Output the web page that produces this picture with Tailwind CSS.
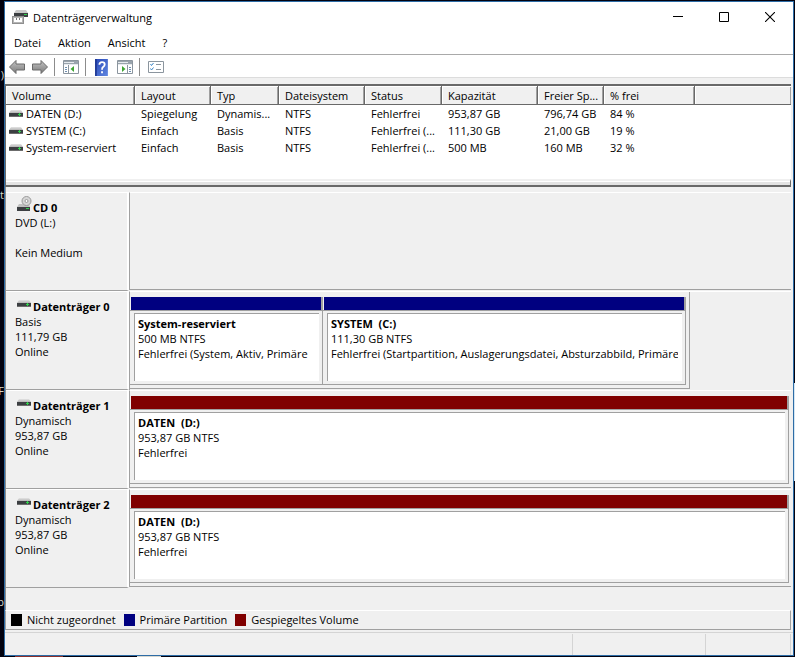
<!DOCTYPE html>
<html lang="de">
<head>
  <meta charset="UTF-8" />
  <title>Datenträgerverwaltung</title>
  <meta name="viewport" content="width=device-width, initial-scale=1.0" />
  <script src="https://cdn.jsdelivr.net/npm/@tailwindcss/browser@4"></script>
</head>
<body class="relative flex min-h-screen overflow-hidden bg-[#02020f] pt-px pr-px pb-px pl-1 font-['Open_Sans',sans-serif] text-[11px] leading-[15px] text-black">

<!-- Shared icons -->
<svg class="absolute h-0 w-0">
  <linearGradient id="lid" x1="0" y1="0" x2="0" y2="1">
    <stop offset="0" stop-color="#e4e4e4" /><stop offset="1" stop-color="#b4b4b4" />
  </linearGradient>
  <linearGradient id="arrow" x1="0" y1="0" x2="0" y2="1">
    <stop offset="0" stop-color="#c4c4c4" /><stop offset="1" stop-color="#7a7a7a" />
  </linearGradient>
  <linearGradient id="book" x1="0" y1="0" x2="1" y2="1">
    <stop offset="0" stop-color="#2848b8" /><stop offset="1" stop-color="#5f86e0" />
  </linearGradient>
  <symbol id="drive" viewBox="0 0 14 7">
    <path d="M2 0h10l2 3H0z" fill="url(#lid)" />
    <rect y="3" width="14" height="4" fill="#3c3f42" />
    <rect y="6" width="14" height="1" fill="#6c6c6c" />
    <rect x="9" y="4" width="3" height="1" fill="#2fd04a" />
    <rect x="10" y="3" width="1" height="3" fill="#2fd04a" />
  </symbol>
</svg>

<!-- Desktop behind the window -->
<div class="absolute inset-y-0 left-0 w-1 overflow-hidden text-[#d8d8c8]" aria-hidden="true">
  <span class="absolute top-[67px] right-0">)</span>
  <span class="absolute top-[187px] right-0">t</span>
  <span class="absolute top-[383px] right-0">F</span>
  <span class="absolute top-[594px] right-0">p</span>
</div>
<div class="absolute top-[383px] right-0 h-[98px] w-px bg-[#d5e6f2]"></div>
<div class="absolute bottom-0 left-[15px] h-px w-12 bg-[#8c2f2a]"></div>
<div class="absolute bottom-0 left-[137px] h-px w-6 bg-[#d8d8d0]"></div>

<main class="flex min-w-0 flex-1 flex-col border border-[#2d6ca6] bg-[#f0f0f0]">

  <!-- Title bar -->
  <header class="flex h-[30px] items-center bg-white pl-[7px]">
    <svg class="mr-[5px] h-4 w-4" viewBox="0 0 16 16">
      <path d="M4 1h10l2 3H2z" fill="#c9c9c9" />
      <path d="M2 4h14v4H2z" fill="#3c3f42" />
      <rect x="12" y="5" width="3" height="1" fill="#2fd04a" />
      <path d="M0 7h12v8H0z" fill="#8f8f8f" />
      <path d="M1 8h10v6H1z" fill="#b5b5b5" />
      <path d="M2 9h8v4H2z" fill="#fff" />
      <path d="M4 9h1v2H4zM7 9h1v2H7z" fill="#777" />
    </svg>
    <h1 class="flex-1">Datenträgerverwaltung</h1>
    <button aria-label="Minimieren" class="flex h-full w-[46px] items-center justify-center">
      <svg class="h-[10px] w-[10px]" viewBox="0 0 10 10"><path d="M0 4.500h10" stroke="#000" /></svg>
    </button>
    <button aria-label="Maximieren" class="flex h-full w-[46px] items-center justify-center">
      <svg class="h-[10px] w-[10px]" viewBox="0 0 10 10"><path d="M.5.5h9v9h-9z" fill="none" stroke="#000" /></svg>
    </button>
    <button aria-label="Schließen" class="flex h-full w-[46px] items-center justify-center">
      <svg class="h-[10px] w-[10px]" viewBox="0 0 10 10"><path d="M0 0l10 10M10 0L0 10" stroke="#000" stroke-width="1.100" /></svg>
    </button>
  </header>

  <!-- Menu -->
  <nav class="flex h-[23px] items-center gap-[17px] border-b border-[#a9a9a9] bg-white pb-[2px] pl-[9px]">
    <button>Datei</button>
    <button>Aktion</button>
    <button>Ansicht</button>
    <button>?</button>
  </nav>

  <!-- Toolbar -->
  <div class="flex h-[23px] items-center border-b border-[#dcdcdc] bg-white pt-[2px] pl-1">
    <button aria-label="Zurück">
      <svg class="h-4 w-4" viewBox="0 0 16 16"><path d="M.5 8L7 1.500V5h8.500v6H7v3.500z" fill="url(#arrow)" stroke="#6a6a6a" /></svg>
    </button>
    <button aria-label="Vorwärts" class="ml-[7px]">
      <svg class="h-4 w-4" viewBox="0 0 16 16"><path d="M15.500 8L9 1.500V5H.5v6H9v3.500z" fill="url(#arrow)" stroke="#6a6a6a" /></svg>
    </button>
    <div class="mx-[6px] h-[18px] w-px bg-[#8c8c8c]"></div>
    <button aria-label="Konsolenstruktur einblenden" class="ml-[2px]">
      <svg class="h-4 w-4" viewBox="0 0 16 16">
        <path d="M.5 1.500h15v13H.5z" fill="#fff" stroke="#8b959e" />
        <path d="M1 2h14v3H1z" fill="#9aa4ad" />
        <path d="M1 3.500h10M1 5.500h14" stroke="#e6eaee" />
        <path d="M5.500 6v8.500" stroke="#8b959e" />
        <path d="M2 8.500h2M2 10.500h2M2 12.500h2" stroke="#6e8fb0" />
        <path d="M11 7v6l-3.500-3z" fill="#3fa535" />
      </svg>
    </button>
    <div class="mx-[6px] h-[18px] w-px bg-[#8c8c8c]"></div>
    <button aria-label="Hilfe" class="ml-[2px]">
      <svg class="h-[17px] w-[15px]" viewBox="0 0 14 16">
        <path d="M1 0h12v16H1z" fill="url(#book)" />
        <path d="M1 0h1.500v16H1z" fill="#1c3590" />
        <path d="M5 5.500q0-2.500 2.500-2.500T10 5.200Q10 6.500 8.500 7.600 7.500 8.300 7.500 10M7.500 11.500v1.800" fill="none" stroke="#fff" stroke-width="1.700" />
      </svg>
    </button>
    <button aria-label="Aktionsbereich einblenden" class="ml-2">
      <svg class="h-4 w-4" viewBox="0 0 16 16">
        <path d="M.5 1.500h15v13H.5z" fill="#fff" stroke="#8b959e" />
        <path d="M1 2h14v3H1z" fill="#9aa4ad" />
        <path d="M1 3.500h10M1 5.500h14" stroke="#e6eaee" />
        <path d="M10.500 6v8.500" stroke="#8b959e" />
        <path d="M12 8.500h2M12 10.500h2M12 12.500h2" stroke="#6e8fb0" />
        <path d="M5 7v6l3.500-3z" fill="#3fa535" />
      </svg>
    </button>
    <div class="mx-[6px] h-[18px] w-px bg-[#8c8c8c]"></div>
    <button aria-label="Eigenschaften" class="ml-[2px]">
      <svg class="h-4 w-4" viewBox="0 0 16 16">
        <path d="M.5 2.500h15v11H.5z" fill="#fff" stroke="#8b959e" />
        <path d="M2.500 5l1 1.500 2-2.500M2.500 9.500l1 1.500 2-2.500" fill="none" stroke="#3a86c8" />
        <path d="M8 5.500h5M8 10.500h5" stroke="#8b959e" />
      </svg>
    </button>
  </div>

  <!-- Volume list -->
  <section class="mt-[6px] mr-[2px] border-t-2 border-l border-[#696969] bg-white">
    <table class="w-full table-fixed border-separate border-spacing-0 text-left">
      <colgroup>
        <col class="w-[129px]" /><col class="w-[76px]" /><col class="w-[68px]" /><col class="w-[86px]" />
        <col class="w-[77px]" /><col class="w-[96px]" /><col class="w-[66px]" /><col class="w-[91px]" /><col />
      </colgroup>
      <thead class="bg-[#f0f0f0]">
        <tr class="[&>th]:h-[19px] [&>th]:truncate [&>th]:border-r [&>th]:border-b [&>th]:border-[#696969] [&>th]:pl-[6px] [&>th]:font-normal [&>th]:shadow-[inset_1px_1px_#fff,inset_-1px_0_#a0a0a0]">
          <th>Volume</th><th>Layout</th><th>Typ</th><th>Dateisystem</th><th>Status</th><th>Kapazität</th><th>Freier Sp...</th><th>% frei</th><th class="border-r-0!"></th>
        </tr>
      </thead>
      <tbody class="[&_td]:h-[17px] [&_td]:truncate [&_td]:pl-[6px] [&_td:first-child]:pl-[3px]">
        <tr>
          <td><svg class="mr-[3px] mb-px inline h-[7px] w-[14px] align-baseline"><use href="#drive" /></svg>DATEN (D:)</td>
          <td>Spiegelung</td><td>Dynamis...</td><td>NTFS</td><td>Fehlerfrei</td><td>953,87 GB</td><td>796,74 GB</td><td>84 %</td><td></td>
        </tr>
        <tr>
          <td><svg class="mr-[3px] mb-px inline h-[7px] w-[14px] align-baseline"><use href="#drive" /></svg>SYSTEM (C:)</td>
          <td>Einfach</td><td>Basis</td><td>NTFS</td><td>Fehlerfrei (...</td><td>111,30 GB</td><td>21,00 GB</td><td>19 %</td><td></td>
        </tr>
        <tr>
          <td><svg class="mr-[3px] mb-px inline h-[7px] w-[14px] align-baseline"><use href="#drive" /></svg>System-reserviert</td>
          <td>Einfach</td><td>Basis</td><td>NTFS</td><td>Fehlerfrei (...</td><td>500 MB</td><td>160 MB</td><td>32 %</td><td></td>
        </tr>
      </tbody>
    </table>
    <div class="h-[23px]"></div>
    <!-- Splitter -->
    <div class="h-2 border-t-2 border-r border-b-2 border-t-[#f0f0f0] border-r-[#696969] border-b-[#696969] bg-[#e3e3e3] shadow-[inset_0_1px_#fff]"></div>
  </section>

  <!-- Disks -->
  <section class="mr-[2px] flex-1 border-l border-[#8c8c8c] pt-[5px]">
    <div class="flex h-[99px]">
      <div class="w-[123px] border-t border-r-2 border-b border-t-white border-r-white border-b-[#a0a0a0] pt-[7px] pl-[9px]">
        <h2 class="relative pl-[18px] font-bold"><svg class="absolute bottom-1 left-[2px] h-[15px] w-[15px]" viewBox="0 0 15 15">
          <path d="M2 8h10l1 3H0z" fill="#c0c0c0" />
          <circle cx="9.500" cy="5" r="4.500" fill="#d6d6d6" stroke="#9a9a9a" /><circle cx="9.500" cy="5" r="1.500" fill="#fff" stroke="#9a9a9a" />
          <path d="M0 11h13v4H0z" fill="#3c3f42" /><path d="M9 12.500h3" stroke="#2fd04a" />
        </svg>CD 0</h2>
        <p>DVD (L:)</p>
        <p class="mt-[15px]">Kein Medium</p>
      </div>
      <div class="mb-px flex-1 border-t border-b border-l border-t-white border-b-[#a0a0a0] border-l-[#a0a0a0]"></div>
    </div>

    <div class="flex h-[99px]">
      <div class="w-[123px] border-t border-r-2 border-b border-t-white border-r-white border-b-[#a0a0a0] pt-[7px] pl-[9px]">
        <h2 class="relative pl-[18px] font-bold"><svg class="absolute bottom-[7px] left-[2px] h-[7px] w-[14px]"><use href="#drive" /></svg>Datenträger 0</h2>
        <p>Basis</p>
        <p>111,79 GB</p>
        <p>Online</p>
      </div>
      <div class="flex-1 border-t border-l border-t-white border-l-[#a0a0a0]">
        <div class="mb-px flex h-[97px] w-[560px] max-w-full border-r border-b border-[#a0a0a0] pt-[5px] pr-[3px] pb-[3px]">
          <div class="flex w-[193px] flex-col border-r border-b border-[#a0a0a0] pb-[3px]">
            <div class="ml-px h-[13px] border-r border-[#a0a0a0] bg-[#000080]"></div>
            <div class="mb-[2px] h-px bg-[#a0a0a0]"></div>
            <div class="mr-[3px] ml-1 flex-1 border-t border-l border-[#a0a0a0] bg-white pt-[2px] pr-[6px] pl-[3px] whitespace-nowrap">
              <h3 class="overflow-hidden font-bold">System-reserviert</h3>
              <p class="overflow-hidden">500 MB NTFS</p>
              <p class="overflow-hidden">Fehlerfrei (System, Aktiv, Primäre</p>
            </div>
          </div>
          <div class="flex min-w-0 flex-1 flex-col border-r border-b border-[#a0a0a0] pb-[3px]">
            <div class="ml-px h-[13px] border-r border-[#a0a0a0] bg-[#000080]"></div>
            <div class="mb-[2px] h-px bg-[#a0a0a0]"></div>
            <div class="mr-[3px] ml-1 flex-1 border-t border-l border-[#a0a0a0] bg-white pt-[2px] pr-1 pl-[3px] whitespace-nowrap">
              <h3 class="overflow-hidden font-bold">SYSTEM&nbsp; (C:)</h3>
              <p class="overflow-hidden">111,30 GB NTFS</p>
              <p class="overflow-hidden">Fehlerfrei (Startpartition, Auslagerungsdatei, Absturzabbild, Primäre</p>
            </div>
          </div>
        </div>
      </div>
    </div>

    <div class="flex h-[99px]">
      <div class="w-[123px] border-t border-r-2 border-b border-t-white border-r-white border-b-[#a0a0a0] pt-[7px] pl-[9px]">
        <h2 class="relative pl-[18px] font-bold"><svg class="absolute bottom-[7px] left-[2px] h-[7px] w-[14px]"><use href="#drive" /></svg>Datenträger 1</h2>
        <p>Dynamisch</p>
        <p>953,87 GB</p>
        <p>Online</p>
      </div>
      <div class="mb-px flex-1 border-t border-b border-l border-t-white border-b-[#a0a0a0] border-l-[#a0a0a0] pt-[5px] pr-[2px] pb-[3px]">
        <div class="flex h-full flex-col border-r border-b border-[#a0a0a0] pb-[3px]">
          <div class="ml-px h-[13px] border-r border-[#a0a0a0] bg-[#800000]"></div>
          <div class="mb-[2px] h-px bg-[#a0a0a0]"></div>
          <div class="mr-[3px] ml-1 flex-1 border-t border-l border-[#a0a0a0] bg-white pt-[2px] pl-[3px]">
            <h3 class="font-bold">DATEN&nbsp; (D:)</h3>
            <p>953,87 GB NTFS</p>
            <p>Fehlerfrei</p>
          </div>
        </div>
      </div>
    </div>

    <div class="flex h-[99px]">
      <div class="w-[123px] border-t border-r-2 border-b border-t-white border-r-white border-b-[#a0a0a0] pt-[7px] pl-[9px]">
        <h2 class="relative pl-[18px] font-bold"><svg class="absolute bottom-[7px] left-[2px] h-[7px] w-[14px]"><use href="#drive" /></svg>Datenträger 2</h2>
        <p>Dynamisch</p>
        <p>953,87 GB</p>
        <p>Online</p>
      </div>
      <div class="mb-px flex-1 border-t border-b border-l border-t-white border-b-[#a0a0a0] border-l-[#a0a0a0] pt-[5px] pr-[2px] pb-[3px]">
        <div class="flex h-full flex-col border-r border-b border-[#a0a0a0] pb-[3px]">
          <div class="ml-px h-[13px] border-r border-[#a0a0a0] bg-[#800000]"></div>
          <div class="mb-[2px] h-px bg-[#a0a0a0]"></div>
          <div class="mr-[3px] ml-1 flex-1 border-t border-l border-[#a0a0a0] bg-white pt-[2px] pl-[3px]">
            <h3 class="font-bold">DATEN&nbsp; (D:)</h3>
            <p>953,87 GB NTFS</p>
            <p>Fehlerfrei</p>
          </div>
        </div>
      </div>
    </div>
  </section>

  <!-- Legend -->
  <ul class="mr-[2px] flex h-5 items-center gap-2 border border-t-white border-r-[#a0a0a0] border-b-[#a0a0a0] border-l-[#a0a0a0] pb-px pl-[5px]">
    <li class="flex items-center gap-[5px]"><span class="h-3 w-[11px] bg-black"></span>Nicht zugeordnet</li>
    <li class="flex items-center gap-[5px]"><span class="h-3 w-[11px] bg-[#000080]"></span>Primäre Partition</li>
    <li class="flex items-center gap-[5px]"><span class="h-3 w-[11px] bg-[#800000]"></span>Gespiegeltes Volume</li>
  </ul>

  <!-- Status bar -->
  <footer class="mt-[2px] flex h-[23px] border-t border-[#d4d4d4] pt-px pr-[2px]">
    <div class="flex-1 border-r border-[#d4d4d4]"></div>
    <div class="w-[133px] border-r border-[#d4d4d4]"></div>
    <div class="w-[85px] border-r border-[#d4d4d4]"></div>
  </footer>
</main>

</body>
</html>
